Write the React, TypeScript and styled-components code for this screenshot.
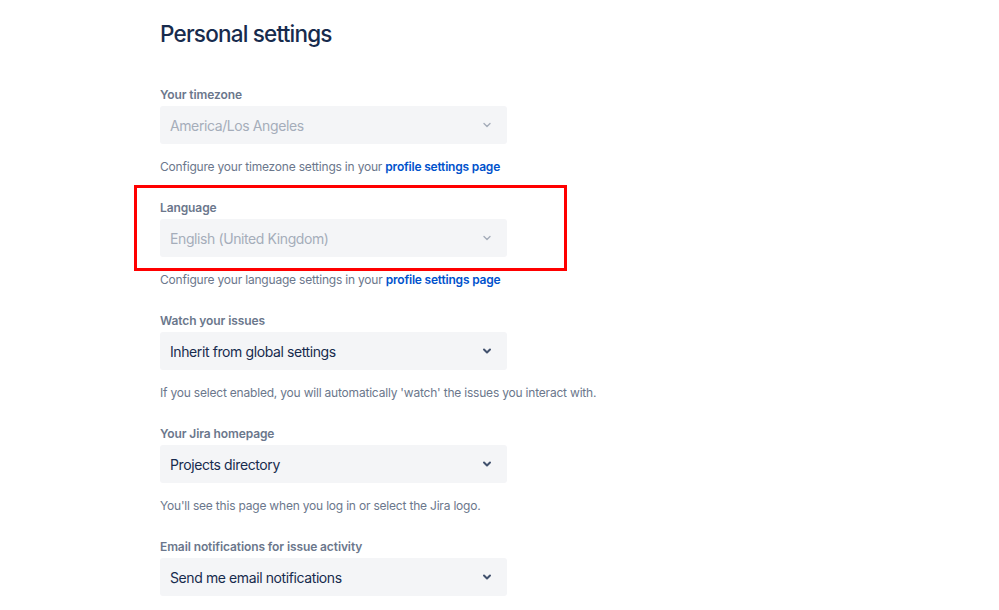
import React from 'react';
import styled, { createGlobalStyle } from 'styled-components';

const GlobalStyle = createGlobalStyle`
  html, body {
    margin: 0;
    padding: 0;
    background: #ffffff;
  }
  body {
    font-family: Inter, "Noto Sans", "Liberation Sans", sans-serif;
    -webkit-font-smoothing: antialiased;
  }
`;

const Page = styled.div`
  width: 999px;
  height: 610px;
  overflow: hidden;
  padding: 18px 0 0 160px;
  box-sizing: border-box;
`;

const Title = styled.h1`
  margin: 0 0 37px;
  font-size: 22.5px;
  line-height: 32px;
  font-weight: 500;
  letter-spacing: -0.8px;
  color: #172b4d;
`;

const Form = styled.div`
  display: flex;
  flex-direction: column;
  gap: 25px;
`;

const Field = styled.div<{ $highlight?: boolean }>`
  position: relative;
  display: flex;
  flex-direction: column;

  ${p =>
    p.$highlight &&
    `
    &::before {
      content: '';
      position: absolute;
      left: -26px;
      top: -15px;
      width: 433px;
      height: 86px;
      border: 3px solid #ff0000;
      box-sizing: border-box;
      pointer-events: none;
    }
  `}
`;

const Label = styled.label`
  font-size: 12px;
  line-height: 16px;
  font-weight: 600;
  letter-spacing: -0.1px;
  color: #6b778c;
  margin-bottom: 3px;
`;

const Select = styled.div<{ $disabled?: boolean }>`
  width: 347px;
  height: 38px;
  box-sizing: border-box;
  padding: 0 12px 0 10px;
  display: flex;
  align-items: center;
  justify-content: space-between;
  background: #f4f5f7;
  border-radius: 3px;
  font-size: 14px;
  letter-spacing: -0.4px;
  color: ${p => (p.$disabled ? '#a5adba' : '#172b4d')};
`;

const Chevron = styled.svg<{ $disabled?: boolean }>`
  width: 16px;
  height: 16px;
  color: ${p => (p.$disabled ? '#a5adba' : '#42526e')};
`;

const Help = styled.div`
  margin-top: 15px;
  font-size: 12px;
  line-height: 16px;
  letter-spacing: -0.2px;
  color: #6b778c;
`;

const Link = styled.a`
  color: #0052cc;
  font-weight: 600;
  text-decoration: none;
`;

interface SettingProps {
  label: string;
  value: string;
  disabled?: boolean;
  highlight?: boolean;
  children?: React.ReactNode;
}

const Setting: React.FC<SettingProps> = ({ label, value, disabled, highlight, children }) => (
  <Field $highlight={highlight}>
    <Label>{label}</Label>
    <Select $disabled={disabled}>
      <span>{value}</span>
      <Chevron $disabled={disabled} viewBox="0 0 16 16" fill="none">
        <path d="M5 6.5l3 3 3-3" stroke="currentColor" strokeWidth={disabled ? 1.4 : 2} strokeLinecap="round" strokeLinejoin="round" />
      </Chevron>
    </Select>
    {children && <Help>{children}</Help>}
  </Field>
);

export default function App() {
  return (
    <>
      <GlobalStyle />
      <Page>
        <Title>Personal settings</Title>
        <Form>
          <Setting label="Your timezone" value="America/Los Angeles" disabled>
            Configure your timezone settings in your <Link href="#">profile settings page</Link>
          </Setting>
          <Setting label="Language" value="English (United Kingdom)" disabled highlight>
            Configure your language settings in your <Link href="#">profile settings page</Link>
          </Setting>
          <Setting label="Watch your issues" value="Inherit from global settings">
            If you select enabled, you will automatically 'watch' the issues you interact with.
          </Setting>
          <Setting label="Your Jira homepage" value="Projects directory">
            You'll see this page when you log in or select the Jira logo.
          </Setting>
          <Setting label="Email notifications for issue activity" value="Send me email notifications" />
        </Form>
      </Page>
    </>
  );
}
